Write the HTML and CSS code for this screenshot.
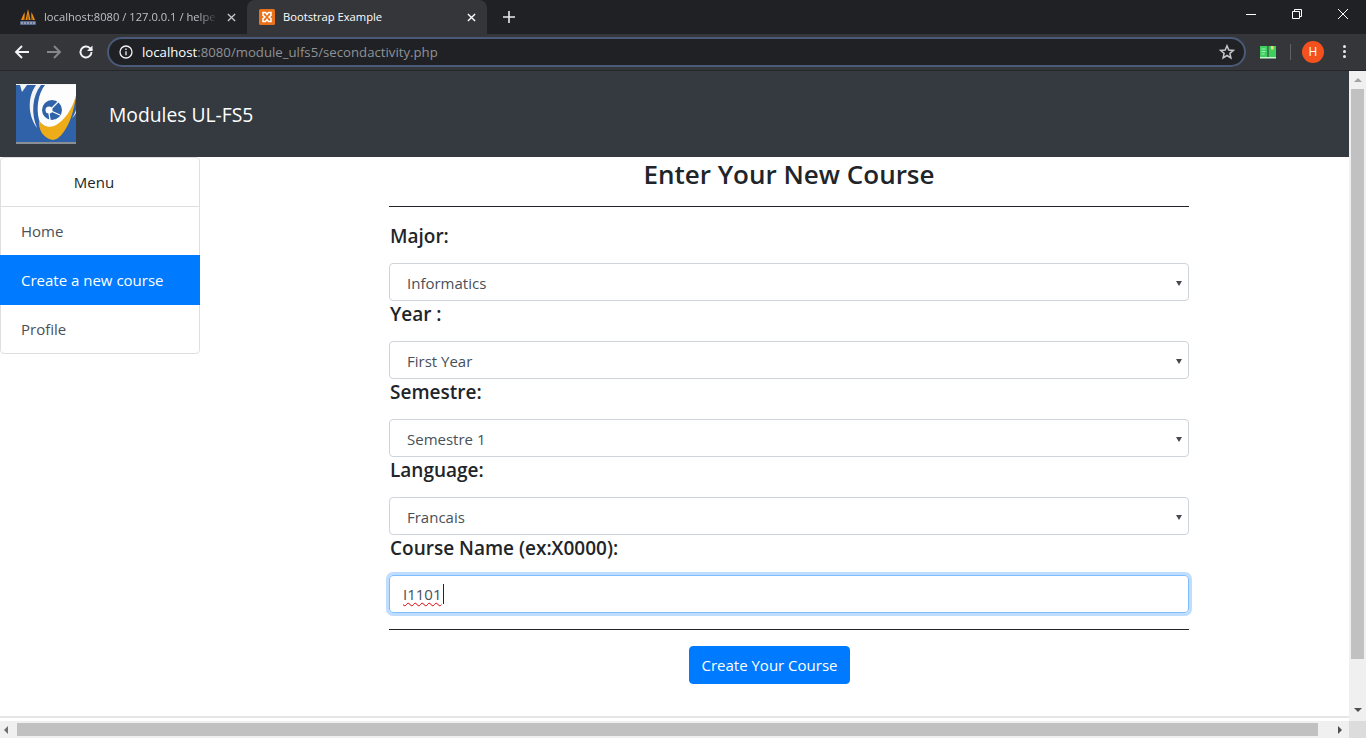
FILE: index.html
```html
<!DOCTYPE html>
<html lang="en">
<head>
<meta charset="utf-8">
<title>Bootstrap Example</title>
<link rel="stylesheet" href="styles.css">
</head>
<body>
<div class="tabstrip">
  <div class="tab tab-idle">
    <svg class="favicon" viewBox="0 0 16 16"><path d="M1 11 4.500 3 5 11zM5.500 11 8 0l2.500 11zM11 11l.5-8 3.500 8z" fill="#f29111"/><path d="M3.500 11 4.800 6 5.300 11zM7 11 8 4l1 7zM11 11l.5-5 1.500 5z" fill="#8a5210"/><rect x="0" y="12" width="16" height="4" rx="1" fill="#5a6a8c"/><path d="M2 13v2M5 13v2M8 13v2M11 13v2M14 13v2" stroke="#c8d0e0" stroke-width="1"/></svg>
    <span class="tab-title fade">localhost:8080 / 127.0.0.1 / helpe</span>
    <svg class="tab-close dim" viewBox="0 0 10 10"><path d="M1 1l8 8M9 1l-8 8"/></svg>
  </div>
  <div class="tab tab-active">
    <svg class="favicon" viewBox="0 0 16 16"><rect width="16" height="16" rx="1.500" fill="#e8711a"/><path d="M4 3.500h2.500L8 5.500l1.500-2H12v2.800L10 8l2 1.700v2.800H9.500l-1.500-2-1.500 2H4V9.700L6 8 4 6.300z" fill="none" stroke="#fff" stroke-width="1.500"/></svg>
    <span class="tab-title">Bootstrap Example</span>
    <svg class="tab-close" viewBox="0 0 10 10"><path d="M1 1l8 8M9 1l-8 8"/></svg>
  </div>
  <svg class="new-tab" viewBox="0 0 12 12"><path d="M6 0v12M0 6h12"/></svg>
  <div class="win-controls">
    <svg class="win-btn" viewBox="0 0 12 12"><path d="M1 6.500h10"/></svg>
    <svg class="win-btn" viewBox="0 0 12 12"><path d="M1.500 3.500h7v7h-7zM3.500 3.500v-2h7v7h-2"/></svg>
    <svg class="win-btn" viewBox="0 0 12 12"><path d="M1 1l10 10M11 1 1 11"/></svg>
  </div>
</div>
<div class="toolbar">
  <svg class="nav-icon" viewBox="0 0 16 16"><path d="M15 8H2M8 2 2 8l6 6"/></svg>
  <svg class="nav-icon off" viewBox="0 0 16 16"><path d="M1 8h13M8 2l6 6-6 6"/></svg>
  <svg class="nav-icon" viewBox="0 0 16 16"><path d="M13.500 8a5.500 5.500 0 1 1-1.600-3.900L14 6.200"/><path class="solid" d="M14.500 1.500v5.500H9z"/></svg>
  <div class="omnibox">
    <svg class="info" viewBox="0 0 14 14"><circle cx="7" cy="7" r="6"/><path d="M7 6.200v4M7 3.500v1.500"/></svg>
    <span class="url"><span class="host">localhost</span>:8080/module_ulfs5/secondactivity.php</span>
    <svg class="star" viewBox="0 0 16 16"><path d="M8 1.800 9.800 6l4.600.4-3.500 3 1 4.500L8 11.500 4.100 13.900l1-4.500-3.500-3L6.200 6z"/></svg>
  </div>
  <svg class="ext" viewBox="0 0 16 14"><path d="M0 1h7.500v11H0zM8.500 1H16v11H8.500z" fill="#3ecf5f"/><path d="M1.500 4h4M1.500 6.500h4M1.500 9h3" stroke="#a8eebb" stroke-width="1"/><rect x="11" y="1" width="2.500" height="3.500" fill="#f5d96b"/><rect y="12" width="16" height="1.500" fill="#c8f5d2"/></svg>
  <span class="sep"></span>
  <span class="avatar">H</span>
  <span class="kebab"><i></i><i></i><i></i></span>
</div>
<div class="viewport">
  <div class="view-col">
    <div class="page">
      <header class="navbar">
        <svg class="logo" viewBox="0 0 60 60">
          <rect width="60" height="60" fill="#f4f4f4"/>
          <rect y="1" width="60" height="57" fill="#2f62a8"/>
          <rect y="58" width="60" height="2" fill="#8a8f96"/>
          <path d="M4 1h7L6 8z" fill="#f4f4f4"/>
          <path d="M20 1C12 12 11 30 21 44 15 30 16 12 25 1z" fill="#f4f4f4"/>
          <path d="M29 1h31v11C56 30 46 44 34 44c-6-2-10-4-11-8C20 24 22 10 29 1z" fill="#fdfdfd"/>
          <path d="M60 11C58 32 48 55 37 56c-9-1-15-10-14-20 3 6 9 8 15 6C48 38 57 24 60 11z" fill="#eead18"/>
          <path d="M60 26c-1 3-2 5-4 8 2-2 3-3 4-5z" fill="#f4f4f4"/>
          <circle cx="36" cy="26" r="10" fill="#2f62a8"/>
          <circle cx="33" cy="26" r="3.500" fill="#fff"/>
          <path d="M35 25l7-7M35 27l9 4M33 29l1 7" stroke="#fff" stroke-width="1.300"/>
        </svg>
        <span class="brand">Modules UL-FS5</span>
      </header>
      <div class="content">
        <nav class="menu">
          <div class="menu-head">Menu</div>
          <a class="menu-item">Home</a>
          <a class="menu-item active">Create a new course</a>
          <a class="menu-item">Profile</a>
        </nav>
        <main class="form-area">
          <h2 class="title">Enter Your New Course</h2>
          <hr class="rule">
          <label class="field-label">Major:</label>
          <div class="select"><span>Informatics</span><i class="caret"></i></div>
          <label class="field-label">Year :</label>
          <div class="select"><span>First Year</span><i class="caret"></i></div>
          <label class="field-label">Semestre:</label>
          <div class="select"><span>Semestre 1</span><i class="caret"></i></div>
          <label class="field-label">Language:</label>
          <div class="select"><span>Francais</span><i class="caret"></i></div>
          <label class="field-label">Course Name (ex:X0000):</label>
          <div class="input-focus"><span class="typed">I1101</span></div>
          <hr class="rule rule-bottom">
          <div class="actions"><button class="btn" type="button">Create Your Course</button></div>
        </main>
      </div>
      <div class="page-foot"></div>
    </div>
    <div class="hscroll">
      <i class="arrow-left"></i>
      <div class="hthumb"></div>
      <i class="arrow-right"></i>
    </div>
  </div>
  <div class="vscroll-col">
    <div class="vscroll">
      <i class="arrow-up"></i>
      <div class="vthumb"></div>
      <i class="arrow-down"></i>
    </div>
    <div class="corner"></div>
  </div>
</div>
</body>
</html>
```
FILE: styles.css
```css
* { box-sizing: border-box; }
html, body { margin: 0; height: 738px; overflow: hidden; background: #fff; }
body { font-family: "Open Sans", "Noto Sans", sans-serif; font-size: 16px; color: #212529; }

/* browser chrome */
.tabstrip { height: 34px; background: #202124; display: flex; align-items: flex-end; padding-left: 8px; }
.tab { height: 34px; width: 239px; display: flex; align-items: center; color: #e8eaed; font-size: 12px; }
.tab-idle { padding-left: 12px; color: #bdc1c6; }
.tab-active { width: 240px; background: #35363a; border-radius: 8px 8px 0 0; padding-left: 12px; color: #fff; }
.favicon { width: 16px; height: 16px; flex: none; }
.tab-title { margin: 0 0 2px 8px; flex: 1; white-space: nowrap; overflow: hidden; font-size: 11.200px; }
.fade { -webkit-mask-image: linear-gradient(90deg, #000 88%, transparent); mask-image: linear-gradient(90deg, #000 88%, transparent); }
.tab-close { width: 9px; height: 9px; margin: 0 11px 0 9px; flex: none; fill: none; stroke: #fff; stroke-width: 1.500; }
.tab-close.dim { stroke: #c4c6ca; }
.new-tab { width: 12px; height: 12px; margin: 0 0 11px 16px; fill: none; stroke: #e8eaed; stroke-width: 1.600; }
.win-controls { margin-left: auto; align-self: flex-start; display: flex; }
.win-btn { width: 12px; height: 12px; margin: 8px 17px 0; fill: none; stroke: #fff; stroke-width: 1; }

.toolbar { height: 37px; background: #35363a; border-bottom: 1px solid #26272a; display: flex; align-items: center; padding: 0 20px 1px 14px; }
.nav-icon { width: 16px; height: 16px; margin-right: 16px; flex: none; fill: none; stroke: #f1f3f4; stroke-width: 1.900; }
.nav-icon.off { stroke: #85878a; }
.nav-icon .solid { fill: #f1f3f4; stroke: none; }
.omnibox { flex: 1; height: 30px; margin-left: -3px; background: #202124; border: 2px solid #4a5a78; border-radius: 15px; display: flex; align-items: center; padding: 0 9px 0 10px; font-size: 13.200px; }
.info { width: 14px; height: 14px; flex: none; fill: none; stroke: #f1f3f4; stroke-width: 1.300; }
.url { margin-left: 9px; color: #8f9297; flex: 1; white-space: nowrap; }
.host { color: #fff; }
.star { width: 16px; height: 16px; flex: none; fill: none; stroke: #c6c8cb; stroke-width: 1.500; }
.ext { width: 16px; height: 14px; margin-left: 14px; flex: none; }
.sep { width: 1px; height: 16px; background: #5f6164; margin: 0 11px 0 14px; }
.avatar { width: 22px; height: 22px; border-radius: 50%; background: #f4511e; color: #fff; font-size: 12px; display: flex; align-items: center; justify-content: center; flex: none; }
.kebab { display: flex; flex-direction: column; gap: 2px; margin-left: 19px; }
.kebab i { width: 3px; height: 3px; border-radius: 50%; background: #e8eaed; }

/* viewport and scrollbars */
.viewport { height: 667px; display: flex; }
.view-col { flex: 1; min-width: 0; display: flex; flex-direction: column; }
.page { flex: 1; display: flex; flex-direction: column; background: #fff; min-height: 0; }
.hscroll { height: 17px; background: #f0f0f0; display: flex; align-items: center; padding: 0 4px; }
.hthumb { width: 1301px; height: 13px; background: #c1c1c1; margin-left: 9px; }
.arrow-left { border: 4px solid transparent; border-right: 4px solid #6e6e6e; border-left: 0; width: 0; height: 0; }
.arrow-right { border: 4px solid transparent; border-left: 4px solid #505050; border-right: 0; width: 0; height: 0; margin-left: 20px; }
.vscroll-col { width: 17px; display: flex; flex-direction: column; }
.vscroll { flex: 1; background: #f0f0f0; display: flex; flex-direction: column; align-items: center; padding-top: 7px; }
.vthumb { width: 13px; height: 570px; background: #c1c1c1; margin-top: 7px; }
.arrow-up { border: 4px solid transparent; border-bottom: 4px solid #a3a3a3; border-top: 0; width: 0; height: 0; }
.arrow-down { border: 4px solid transparent; border-top: 4px solid #505050; border-bottom: 0; width: 0; height: 0; margin-top: 49px; }
.corner { height: 17px; background: #dcdcdc; }

/* page */
.navbar { height: 86px; background: #343a40; display: flex; align-items: center; padding: 0 0 0 16px; flex: none; }
.logo { width: 60px; height: 60px; flex: none; }
.brand { margin-left: 33px; color: #fff; font-size: 19.300px; }
.content { flex: 1; display: flex; align-items: flex-start; min-height: 0; }
.menu { width: 200px; flex: none; border: 1px solid #dfdfdf; border-radius: 4px; display: flex; flex-direction: column; height: 197px; }
.menu-head { height: 49px; border-bottom: 1px solid #dfdfdf; display: flex; align-items: center; justify-content: center; padding-right: 12px; font-size: 15px; }
.menu-item { height: 49px; display: flex; align-items: center; padding-left: 20px; color: #495057; font-size: 15px; }
.menu-item.active { background: #007bff; color: #fff; margin: 0 -1px; padding-left: 21px; height: 50px; }
.form-area { width: 800px; margin-left: 189px; flex: none; }
.title { margin: 0; text-align: center; font-size: 26px; font-weight: 600; line-height: 35px; height: 36px; }
.rule { margin: 13px 0 0; border: 0; border-top: 1px solid #212529; height: 1px; }
.field-label { display: block; padding-left: 1px; font-size: 19px; font-weight: 600; line-height: 26px; height: 40px; }
.rule + .field-label { margin-top: 16px; }
.select { height: 38px; border: 1px solid #ced4da; border-radius: 4px; display: flex; align-items: center; justify-content: space-between; padding: 2px 6px 0 17px; color: #495057; font-size: 15px; }
.caret { border: 3.500px solid transparent; border-top: 5px solid #45494f; border-bottom: 0; width: 0; height: 0; }
.input-focus { height: 38px; border: 1px solid #80bdff; border-radius: 4px; box-shadow: 0 0 0 3px rgba(0,123,255,.25); display: flex; align-items: center; padding: 0 13px; color: #495057; font-size: 15px; }
.typed { border-right: 1px solid #212529; padding-right: 1px; line-height: 20px; text-decoration: underline wavy #e00000 1px; text-underline-offset: 2px; text-decoration-skip-ink: none; }
.rule-bottom { margin-top: 16px; }
.actions { width: 761px; display: flex; justify-content: center; margin-top: 16px; }
.btn { height: 38px; width: 161px; padding: 0; border: 1px solid #007bff; border-radius: 4px; background: #007bff; color: #fff; font-family: inherit; font-size: 15px; }
.page-foot { height: 5px; border-top: 2px solid #e6e6e6; flex: none; }
```
